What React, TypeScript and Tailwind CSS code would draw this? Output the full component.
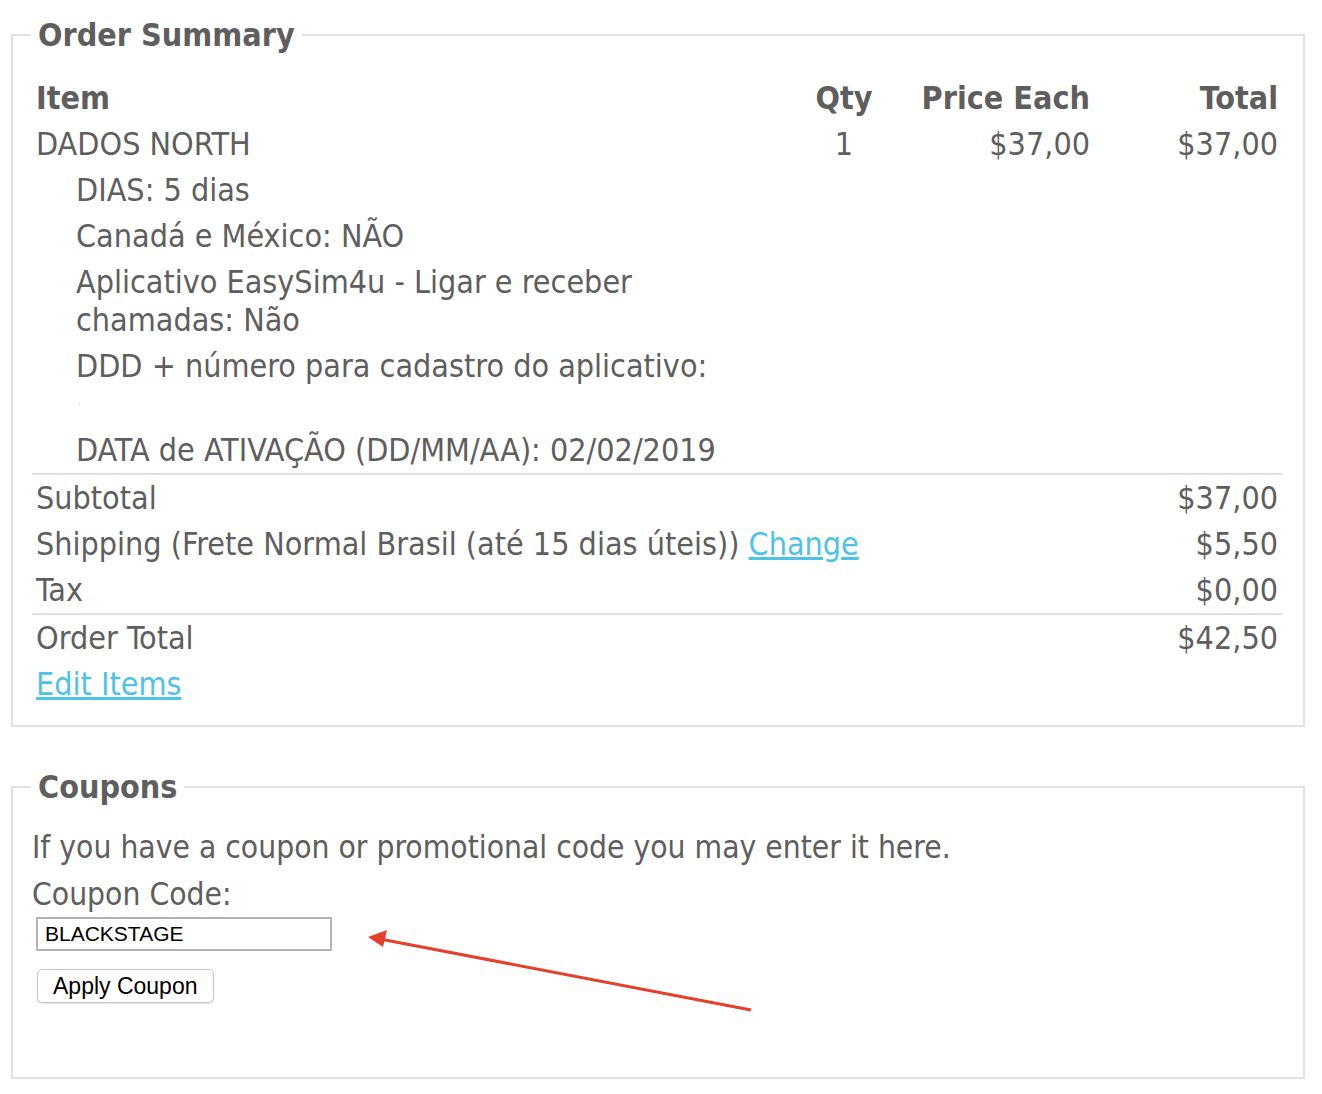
import React from "react";

const font = { fontFamily: '"DejaVu Sans Condensed", "DejaVu Sans", sans-serif' };
const sysFont = { fontFamily: '"Liberation Sans", Arial, sans-serif' };

function Row({ left, qty, price, total, indent = false, bold = false }: { left: React.ReactNode; qty?: string; price?: string; total?: string; indent?: boolean; bold?: boolean }) {
  return (
    <div className={`flex py-[4px] leading-[38px] ${bold ? "font-bold" : ""} text-[32px]`}>
      <div className={`flex-1 whitespace-nowrap ${indent ? "pl-[44px]" : "pl-[4px]"}`}>{left}</div>
      <div className="w-[110px] text-center">{qty}</div>
      <div className="w-[195px] text-right px-[4px]">{price}</div>
      <div className="w-[188px] text-right px-[4px]">{total}</div>
    </div>
  );
}

function SumRow({ left, total }: { left: React.ReactNode; total: string }) {
  return (
    <div className="flex py-[4px] leading-[38px] text-[32px]">
      <div className="flex-1 whitespace-nowrap pl-[4px]">{left}</div>
      <div className="text-right px-[4px]">{total}</div>
    </div>
  );
}

export default function App() {
  return (
    <div className="relative w-[1322px] h-[1094px] bg-white text-[#5e5e5e] pl-[11px] pr-[17px] pt-[14px]" style={font}>
      <fieldset className="border-2 border-[#e1e1e1] pl-[19px] pr-[21px] pb-[18px] m-0">
        <legend className="-ml-[1px] px-[7px] font-bold text-[32px] leading-[42px]">Order Summary</legend>
        <div className="pt-[19px]">
          <Row bold left="Item" qty="Qty" price="Price Each" total="Total" />
          <Row left="DADOS NORTH" qty="1" price="$37,00" total="$37,00" />
          <Row indent left="DIAS: 5 dias" />
          <Row indent left="Canadá e México: NÃO" />
          <Row indent left={<>Aplicativo EasySim4u - Ligar e receber<br />chamadas: Não</>} />
          <Row indent left={<>DDD + número para cadastro do aplicativo:<div className="h-[38px] flex items-center pl-[2px]"><span className="block w-[2px] h-[2px] bg-[#ececec]" /></div></>} />
          <div className="border-b-2 border-[#e1e1e1]">
            <Row indent left="DATA de ATIVAÇÃO (DD/MM/AA): 02/02/2019" />
          </div>
          <SumRow left="Subtotal" total="$37,00" />
          <SumRow left={<>Shipping (Frete Normal Brasil (até 15 dias úteis)) <a href="#" className="text-[#4fc3e6] underline">Change</a></>} total="$5,50" />
          <div className="border-b-2 border-[#e1e1e1]">
            <SumRow left="Tax" total="$0,00" />
          </div>
          <SumRow left="Order Total" total="$42,50" />
          <div className="py-[4px] leading-[38px] text-[32px] px-[4px]">
            <a href="#" className="text-[#4fc3e6] underline">Edit Items</a>
          </div>
        </div>
      </fieldset>

      <fieldset className="border-2 border-[#e1e1e1] pl-[19px] pr-[21px] mt-[39px] h-[313px] m-0">
        <legend className="-ml-[1px] px-[7px] font-bold text-[32px] leading-[42px]">Coupons</legend>
        <div className="pt-[20px] text-[31.5px] leading-[38px]">
          <p>If you have a coupon or promotional code you may enter it here.</p>
          <p className="mt-[9px]">Coupon Code:</p>
          <input
            defaultValue="BLACKSTAGE"
            className="block mt-[4px] ml-[4px] w-[296px] h-[34px] border-2 border-[#b3b3b3] px-[7px] text-[21px] text-black outline-none"
            style={sysFont}
          />
          <button
            className="block mt-[18px] ml-[5px] h-[34px] px-[15px] border border-[#c4c4c4] rounded-[5px] bg-white text-black text-[23px] leading-[30px] shadow-[0_1px_1px_rgba(0,0,0,0.1)]"
            style={sysFont}
          >
            Apply Coupon
          </button>
        </div>
      </fieldset>

      <svg className="absolute left-0 top-0 pointer-events-none" width="1322" height="1094">
        <line x1="751" y1="1010" x2="380" y2="939" stroke="#e5402c" strokeWidth="3" />
        <polygon points="368,937 387,930 383,947" fill="#e5402c" />
      </svg>
    </div>
  );
}
